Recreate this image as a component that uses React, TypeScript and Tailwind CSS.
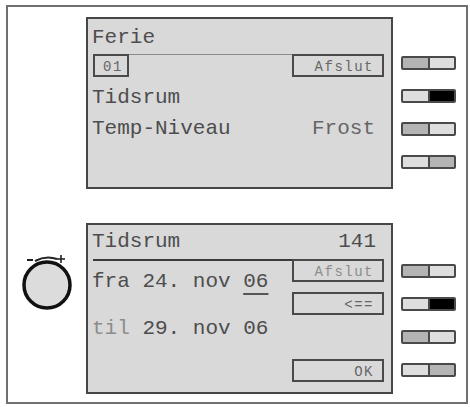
import React from 'react';

type Half = 'dark' | 'light' | 'black';

const halfClass: Record<Half, string> = {
  dark: 'bg-[#b4b4b4]',
  light: 'bg-[#dedede]',
  black: 'bg-black',
};

const SoftKey = ({ left, right }: { left: Half; right: Half }) => (
  <div className="flex h-[14px] w-[55px] rounded-[2px] border-2 border-[#4a4a4a] overflow-hidden">
    <div className={`flex-1 ${halfClass[left]}`} />
    <div className={`flex-1 border-l-2 border-[#4a4a4a] ${halfClass[right]}`} />
  </div>
);

const KeyColumn = ({ top }: { top: string }) => (
  <div className={`ml-[8px] flex w-[55px] flex-col gap-[19px] ${top}`}>
    <SoftKey left="dark" right="light" />
    <SoftKey left="light" right="black" />
    <SoftKey left="dark" right="light" />
    <SoftKey left="light" right="dark" />
  </div>
);

const LcdBox = ({ label, light }: { label: string; light?: boolean }) => (
  <div
    className={`flex h-[23px] w-[92px] items-center justify-end border-2 border-[#4a4a4a] pr-[8px] pt-[2px] text-[14px] tracking-[1.5px] ${
      light ? 'text-[#8c8c8c]' : 'text-[#666]'
    }`}
  >
    {label}
  </div>
);

const Knob = () => (
  <svg width="64" height="64" viewBox="0 0 64 64" className="ml-[8px] mt-[27px]">
    <circle cx="31" cy="35" r="23" fill="#dcdcdc" stroke="#111" strokeWidth="3.5" />
    <line x1="11" y1="10" x2="17" y2="10" stroke="#222" strokeWidth="2" />
    <path d="M19 11 Q30 5 41 9" fill="none" stroke="#222" strokeWidth="2" />
    <line x1="41" y1="9" x2="49" y2="9" stroke="#222" strokeWidth="1.6" />
    <line x1="45" y1="5" x2="45" y2="13" stroke="#222" strokeWidth="1.6" />
  </svg>
);

export default function App() {
  return (
    <div
      className="h-[407px] w-[470px] bg-white pl-[6px] pt-[5px] text-[#4d4d4d]"
      style={{ fontFamily: '"Courier New", Courier, "Nimbus Mono PS", FreeMono, "Liberation Mono", monospace' }}
    >
      <div className="flex h-[399px] w-[462px] flex-col border-2 border-[#707070] pt-[10px]">
        {/* upper display */}
        <div className="flex">
          <div className="w-[78px]" />
          <div className="flex h-[172px] w-[307px] flex-col border-2 border-[#474747] bg-[#d9d9d9] text-[21px] leading-[24px]">
            <div className="pl-[4px] pt-[7px]">Ferie</div>
            <div className="mt-[4px] flex pl-[5px] pr-[7px]">
              <div className="flex h-[23px] w-[36px] items-center justify-center border-2 border-[#4a4a4a] pl-[4px] pt-[2px] text-[14px] tracking-[1.5px] text-[#666]">
                01
              </div>
              <div className="flex-1 self-start border-t border-[#8a8a8a]" />
              <LcdBox label="Afslut" />
            </div>
            <div className="mt-[9px] pl-[4px]">Tidsrum</div>
            <div className="mt-[7px] flex justify-between pl-[4px] pr-[16px]">
              <span>Temp-Niveau</span>
              <span className="text-[#666]">Frost</span>
            </div>
          </div>
          <KeyColumn top="pt-[39px]" />
        </div>

        {/* lower display */}
        <div className="mt-[34px] flex">
          <div className="w-[78px]">
            <Knob />
          </div>
          <div className="flex h-[171px] w-[307px] flex-col border-2 border-[#474747] bg-[#d9d9d9] text-[21px] leading-[24px]">
            <div className="flex justify-between pl-[4px] pr-[15px] pt-[5px]">
              <span>Tidsrum</span>
              <span>141</span>
            </div>
            <div className="mt-[5px] flex pl-[5px] pr-[7px]">
              <div className="flex-1 border-t-2 border-[#3a3a3a]">
                <div className="mt-[9px] -ml-[1px] whitespace-pre">
                  fra 24. nov{' '}
                  <span className="underline decoration-2 decoration-[#555] underline-offset-[6px]">06</span>
                </div>
                <div className="mt-[23px] -ml-[1px] whitespace-pre">
                  <span className="text-[#8c8c8c]">til</span> 29. nov 06
                </div>
              </div>
              <div className="flex flex-col">
                <LcdBox label="Afslut" light />
                <div className="mt-[10px]">
                  <LcdBox label="<==" />
                </div>
                <div className="mt-[44px]">
                  <LcdBox label="OK" />
                </div>
              </div>
            </div>
          </div>
          <KeyColumn top="pt-[41px]" />
        </div>
      </div>
    </div>
  );
}
